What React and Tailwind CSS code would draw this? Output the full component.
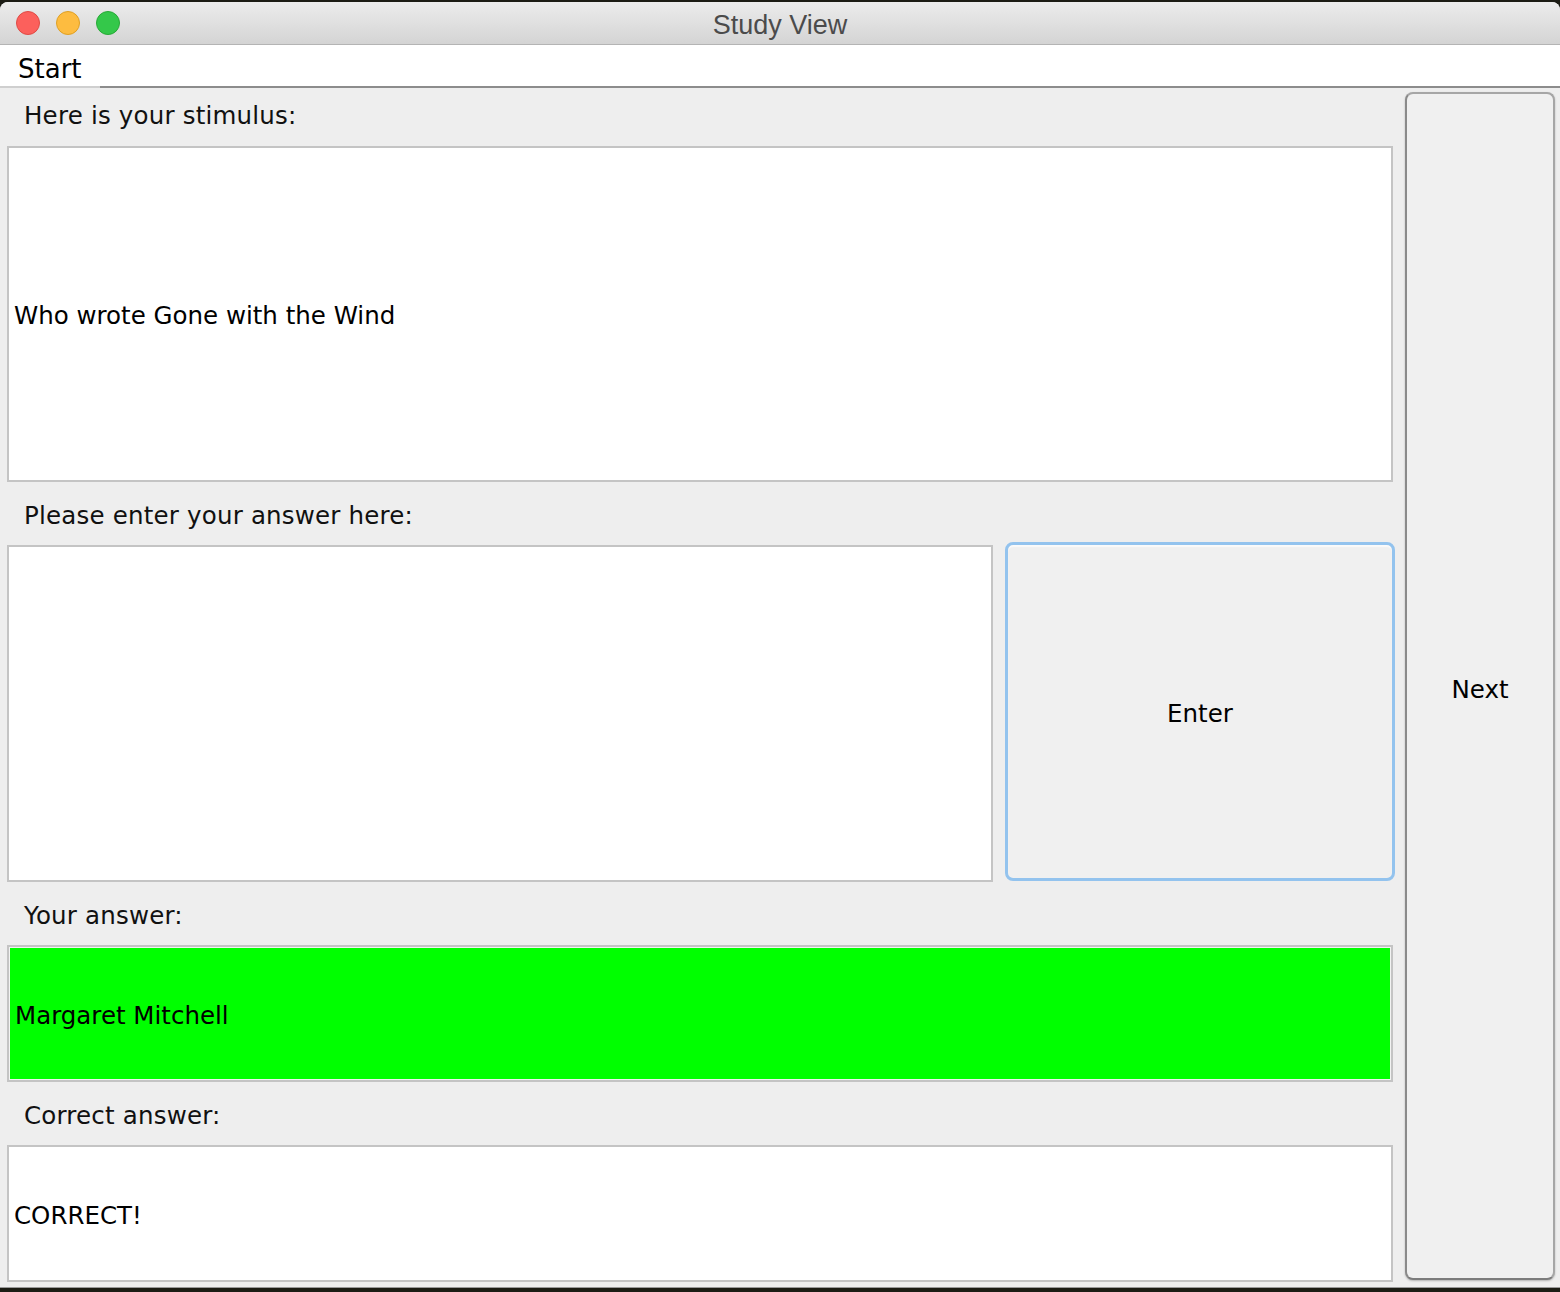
import React from 'react'

const ui = { fontFamily: '"DejaVu Sans", Verdana, sans-serif' }

const Label = ({ children, className = '' }) => (
    <div className={`flex items-center pl-[17px] text-[24.5px] tracking-[0.2px] text-[#111] ${className}`}>
        {children}
    </div>
)

const Field = ({ children, className = '', inner = 'bg-white' }) => (
    <div className={`border-2 border-[#c4c4c4] bg-white ${className}`}>
        <div className={`flex h-full items-center pl-[5px] pt-[5px] text-[24.5px] text-black ${inner}`}>{children}</div>
    </div>
)

const Dot = ({ color, ring }) => (
    <span className={`block h-[24px] w-[24px] rounded-full border ${color} ${ring}`} />
)

export default function App() {
    return (
        <div className="h-[1292px] w-[1560px] overflow-hidden bg-[#1c1c14] pt-[2px]" style={ui}>
            <div className="flex h-[1286px] flex-col overflow-hidden rounded-t-[8px] border-b border-[#9a9a9a] bg-[#eeeeee]">
                {/* title bar */}
                <div className="relative flex h-[43px] items-center border-b border-[#b4b4b4] bg-gradient-to-b from-[#ececec] to-[#d4d4d4]">
                    <div className="flex gap-[16px] pl-[16px]">
                        <Dot color="bg-[#fc605c]" ring="border-[#df4b45]" />
                        <Dot color="bg-[#fdbc40]" ring="border-[#dfa024]" />
                        <Dot color="bg-[#34c84a]" ring="border-[#28a937]" />
                    </div>
                    <div
                        className="absolute inset-x-0 top-[3px] text-center text-[27px] text-[#4b4b4b]"
                        style={{ fontFamily: '"Liberation Sans", Arial, sans-serif' }}
                    >
                        Study View
                    </div>
                </div>

                {/* menu bar */}
                <div className="flex h-[43px] border-b-2 border-[#8c8c8c] bg-white">
                    <div className="-mb-[2px] flex w-[100px] items-center border-b-2 border-[#cfcfcf] pl-[18px] pt-[8px] text-[26px] text-black">
                        Start
                    </div>
                </div>

                {/* content */}
                <div className="flex flex-1 gap-[10px] pl-[7px] pr-[5px]">
                    <div className="flex w-[1388px] flex-col">
                        <Label className="h-[58px] pb-[2px]">Here is your stimulus:</Label>
                        <Field className="h-[336px] w-[1386px]">Who wrote Gone with the Wind</Field>
                        <Label className="h-[60px] pt-[8px]">Please enter your answer here:</Label>
                        <div className="flex h-[340px] gap-[12px]">
                            <div className="mt-[3px] h-[337px] w-[986px] border-2 border-[#c4c4c4] bg-white" />
                            <button className="h-[339px] w-[390px] rounded-[8px] border-[3px] border-[#93c3ee] bg-[#f0f0f0] pt-[6px] text-[24.5px] text-black shadow-[inset_0_2px_1px_#fafafa]">
                                Enter
                            </button>
                        </div>
                        <Label className="h-[63px] pt-[6px]">Your answer:</Label>
                        <Field className="h-[137px] w-[1386px]" inner="bg-[#00ff00] border border-[#f2f2f2]">
                            Margaret Mitchell
                        </Field>
                        <Label className="h-[63px] pt-[6px]">Correct answer:</Label>
                        <Field className="h-[137px] w-[1386px]">CORRECT!</Field>
                    </div>
                    <div className="flex flex-1 flex-col pt-[4px] pb-[2px]">
                        <button className="h-[1188px] w-[150px] rounded-[8px] border-2 border-[#a6a6a6] border-b-[#7c7c7c] border-l-[#8a8a8a] bg-[#f0f0f0] pt-[8px] text-[24.5px] text-black shadow-[0_1px_2px_rgba(0,0,0,0.25)]">
                            Next
                        </button>
                    </div>
                </div>
            </div>
        </div>
    )
}
